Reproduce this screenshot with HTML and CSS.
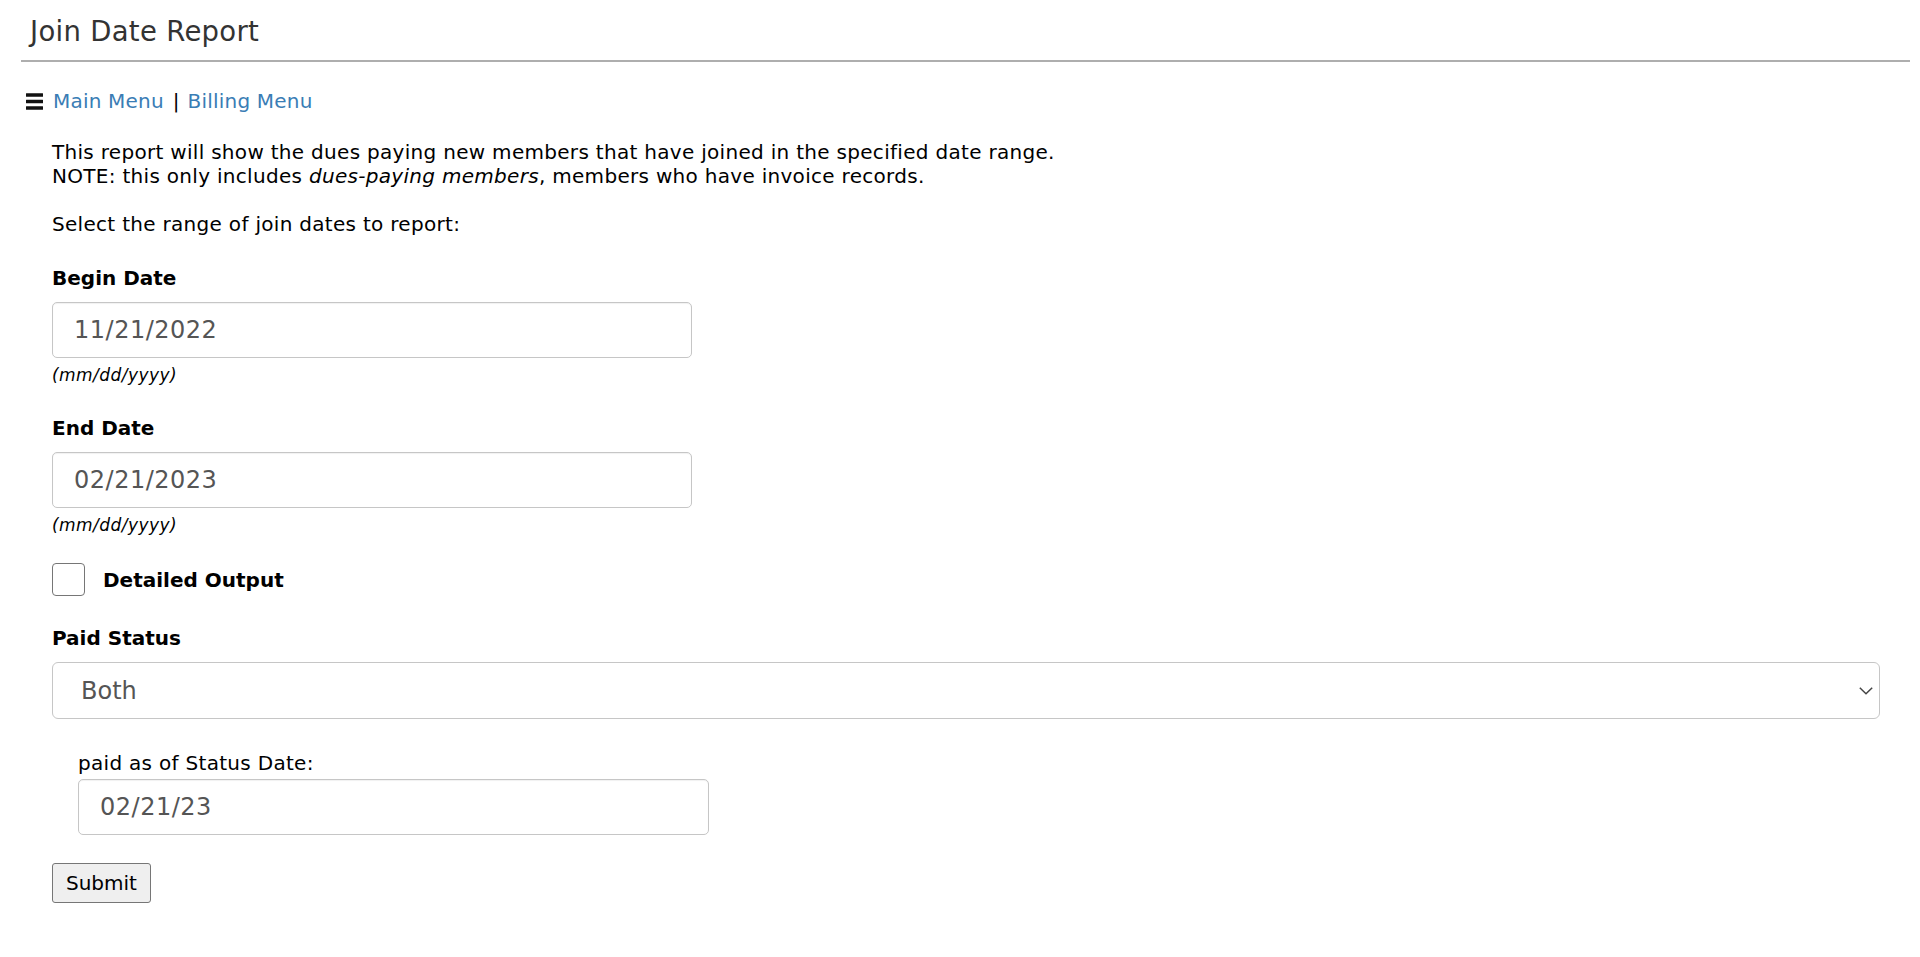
FILE: index.html
```html
<!DOCTYPE html>
<html lang="en">
<head>
<meta charset="utf-8">
<title>Join Date Report</title>
<link rel="stylesheet" href="styles.css">
</head>
<body>
<div class="page">
  <h1 class="title">Join Date Report</h1>
  <div class="rule"></div>
  <nav class="menu">
    <svg class="hamburger" width="17" height="17" viewBox="0 0 17 17" aria-hidden="true">
      <rect x="0" y="0.2" width="17" height="3.6" rx="0.4"/>
      <rect x="0" y="6.7" width="17" height="3.6" rx="0.4"/>
      <rect x="0" y="13.2" width="17" height="3.6" rx="0.4"/>
    </svg>
    <a class="link" href="#">Main Menu</a><span class="sep">|</span><a class="link" href="#">Billing Menu</a>
  </nav>
  <form class="form">
    <p class="intro">This report will show the dues paying new members that have joined in the specified date range.<br>NOTE: this only includes <em>dues-paying members</em>, members who have invoice records.<br><br>Select the range of join dates to report:</p>

    <label class="label label-first" for="begin">Begin Date</label>
    <input class="text-input" id="begin" type="text" value="11/21/2022">
    <div class="hint">(mm/dd/yyyy)</div>

    <label class="label" for="end">End Date</label>
    <input class="text-input" id="end" type="text" value="02/21/2023">
    <div class="hint">(mm/dd/yyyy)</div>

    <div class="check-row">
      <input class="checkbox" id="detailed" type="checkbox">
      <label class="check-label" for="detailed">Detailed Output</label>
    </div>

    <label class="label label-paid" for="paid">Paid Status</label>
    <div class="select-wrap">
      <select class="select" id="paid">
        <option>Both</option>
        <option>Paid</option>
        <option>Unpaid</option>
      </select>
      <svg class="chevron" width="14" height="8" viewBox="0 0 14 8" aria-hidden="true">
        <path d="M0.8 0.8 L7 6.8 L13.2 0.8" fill="none" stroke="#444" stroke-width="1.5"/>
      </svg>
    </div>

    <div class="sub-field">
      <label class="sub-label" for="statusdate">paid as of Status Date:</label>
      <input class="text-input status-input" id="statusdate" type="text" value="02/21/23">
    </div>

    <button class="submit" type="submit">Submit</button>
  </form>
</div>
</body>
</html>
```
FILE: styles.css
```css
html, body {
  margin: 0;
  padding: 0;
  background: #fff;
}

body {
  font-family: "DejaVu Sans", Verdana, sans-serif;
  font-size: 20px;
  line-height: 24px;
  color: #000;
}

.page {
  margin: 0 10px 0 21px;
}

.title {
  margin: 0;
  padding: 15px 0 0 9px;
  font-size: 27.5px;
  line-height: 32px;
  font-weight: normal;
  letter-spacing: 0.3px;
  color: #333;
}

.rule {
  height: 2px;
  margin-top: 13px;
  background: #aeaeae;
}

.menu {
  display: flex;
  align-items: center;
  height: 24px;
  margin-top: 27px;
  padding-left: 5px;
}

.hamburger {
  fill: #111;
  margin-right: 10px;
  flex: none;
}

.link {
  color: #3a7db5;
  text-decoration: none;
  letter-spacing: 0.2px;
}

.sep {
  margin: 0 8px 0 9px;
  color: #000;
}

.form {
  padding: 0 30px 0 31px;
}

.intro {
  margin: 27px 0 0;
  letter-spacing: 0.3px;
}

.label {
  display: block;
  font-weight: bold;
  margin: 31px 0 12px;
}

.label-first {
  margin-top: 30px;
}

.text-input {
  display: block;
  box-sizing: border-box;
  width: 640px;
  height: 56px;
  margin: 0;
  padding: 0 21px;
  border: 1px solid #c6c6c6;
  border-radius: 5px;
  box-shadow: inset 0 1px 1px rgba(0, 0, 0, 0.06);
  font-family: "DejaVu Sans", Verdana, sans-serif;
  font-size: 24px;
  letter-spacing: 0.5px;
  color: #555;
  background: #fff;
  outline: none;
}

.hint {
  margin-top: 7px;
  font-size: 17px;
  line-height: 20px;
  font-style: italic;
  letter-spacing: 0.45px;
}

.check-row {
  display: flex;
  align-items: center;
  margin-top: 28px;
  height: 33px;
}

.checkbox {
  appearance: none;
  -webkit-appearance: none;
  box-sizing: border-box;
  width: 33px;
  height: 33px;
  margin: 0 18px 0 0;
  border: 1px solid #767676;
  border-radius: 4px;
  background: #fff;
  flex: none;
}

.check-label {
  font-weight: bold;
}

.label-paid {
  margin-top: 30px;
}

.select-wrap {
  position: relative;
}

.select {
  appearance: none;
  -webkit-appearance: none;
  display: block;
  box-sizing: border-box;
  width: 100%;
  height: 57px;
  margin: 0;
  padding: 0 28px;
  border: 1px solid #c6c6c6;
  border-radius: 6px;
  background: #fff;
  font-family: "DejaVu Sans", Verdana, sans-serif;
  font-size: 24px;
  color: #555;
  outline: none;
}

.chevron {
  position: absolute;
  right: 7px;
  top: 25px;
  pointer-events: none;
}

.sub-field {
  margin-top: 32px;
  padding-left: 26px;
}

.sub-label {
  display: block;
  margin-bottom: 4px;
  letter-spacing: 0.3px;
}

.status-input {
  width: 631px;
}

.submit {
  display: block;
  margin-top: 28px;
  box-sizing: border-box;
  height: 40px;
  padding: 0 13px;
  border: 1px solid #767676;
  border-radius: 3px;
  background: #efefef;
  font-family: "DejaVu Sans", Verdana, sans-serif;
  font-size: 20px;
  line-height: 24px;
  color: #000;
}
```
